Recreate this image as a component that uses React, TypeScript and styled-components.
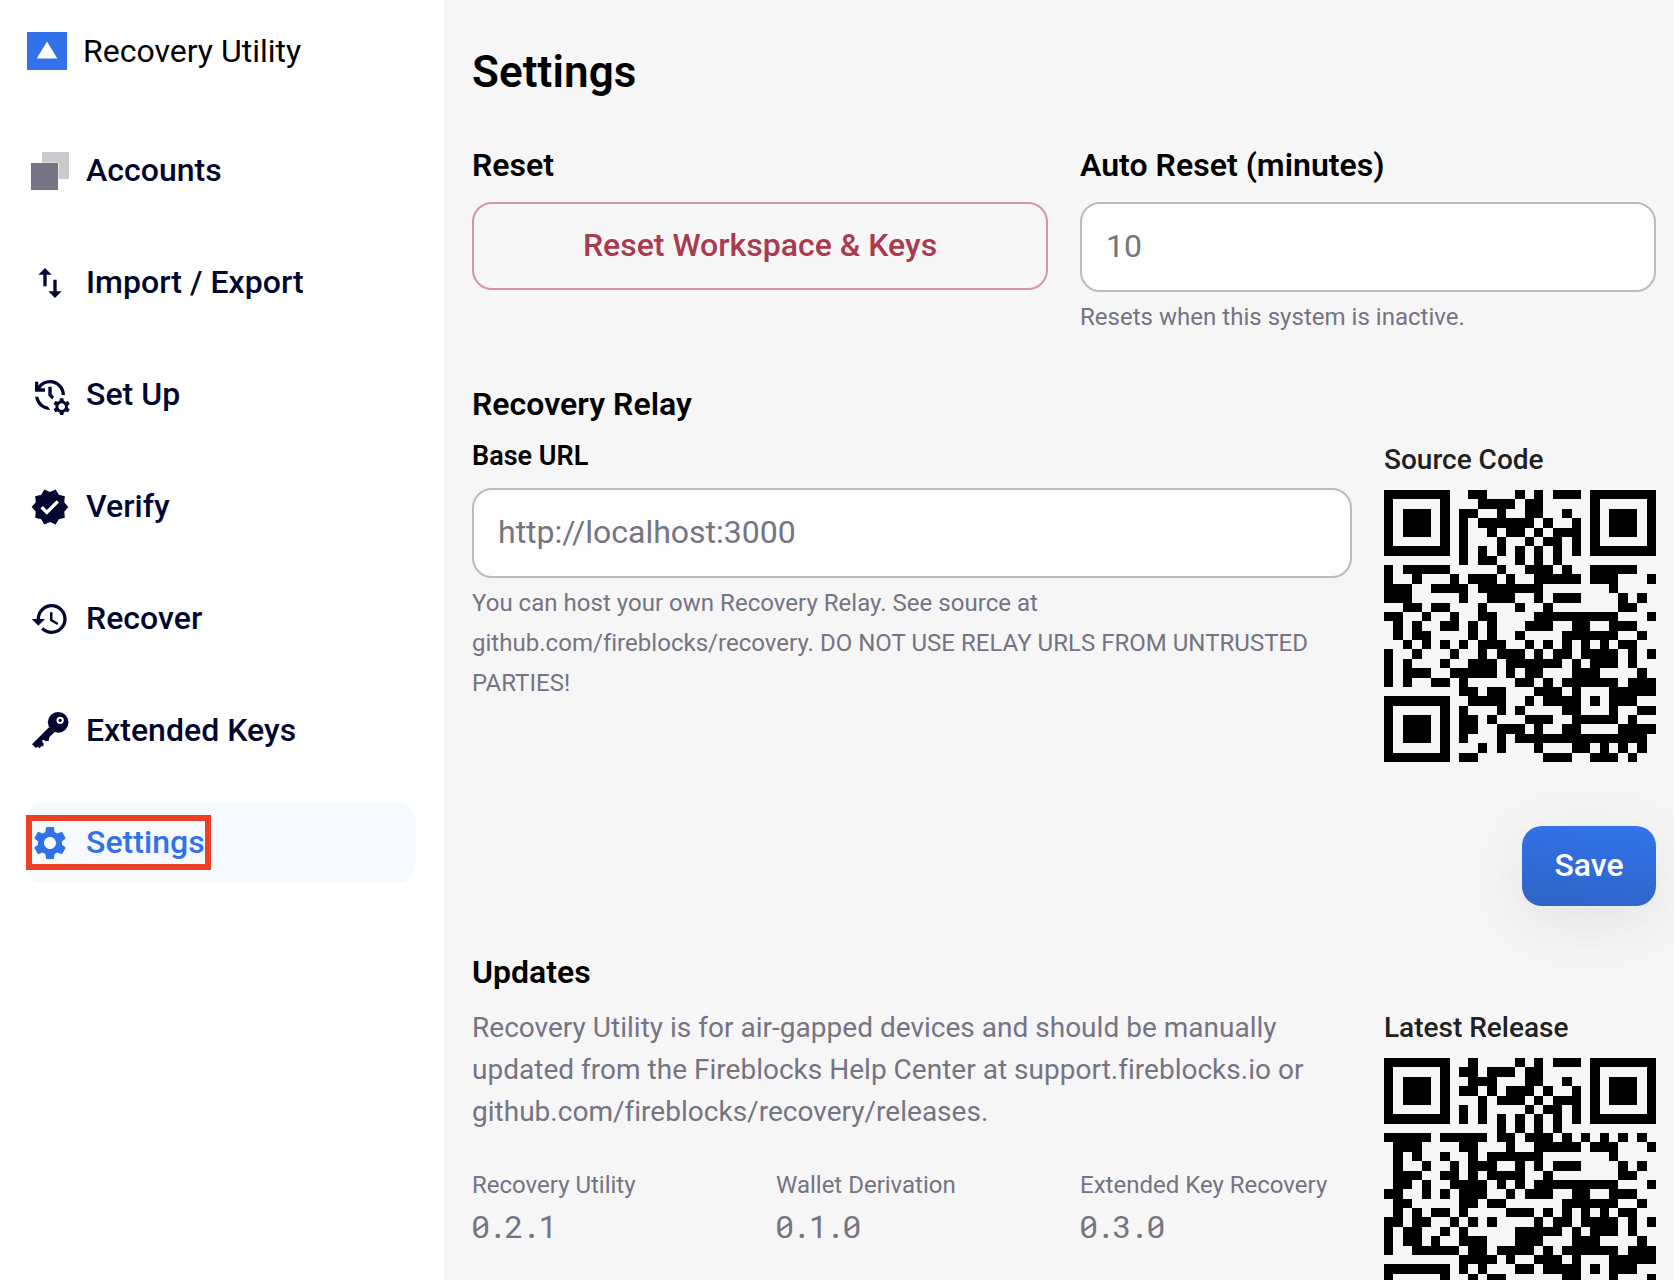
import React from "react";
import styled, { createGlobalStyle } from "styled-components";
import { MdHistory, MdImportExport, MdManageHistory, MdSettings, MdVerified } from "react-icons/md";

const GlobalStyle = createGlobalStyle`
  *, *::before, *::after { box-sizing: border-box; }
  body {
    margin: 0;
    background: #f6f6f6;
    font-family: Roboto, "Liberation Sans", sans-serif;
    font-variant-ligatures: none;
  }
  h1, h2, h3, p, dl, dt, dd { margin: 0; }
`;

const Page = styled.div`
  display: flex;
  height: 1280px;
  overflow: hidden;
`;

const Sidebar = styled.aside`
  flex: none;
  width: 444px;
  padding: 19px 28px 0 24px;
  background: #fff;
`;

const Brand = styled.div`
  display: flex;
  align-items: center;
  gap: 16px;
  height: 64px;
  padding-left: 3px;
  color: #000;
  font-size: 32px;
`;

const Nav = styled.nav`
  display: flex;
  flex-direction: column;
  gap: 32px;
  margin-top: 48px;
`;

const NavItem = styled.a<{ $active?: boolean }>`
  position: relative;
  display: flex;
  align-items: center;
  gap: 16px;
  height: 80px;
  padding-left: 6px;
  border-radius: 20px;
  background: ${(p) => (p.$active ? "#f6faff" : "transparent")};
  color: ${(p) => (p.$active ? "#3171ea" : "#020730")};

  svg { flex: none; }
`;

const NavLabel = styled.span`
  padding-bottom: 2px;
  font-size: 32px;
  font-weight: 500;
  line-height: 48px;
  letter-spacing: 0.03px;
`;

const Highlight = styled.span`
  position: absolute;
  left: 2px;
  top: 12px;
  width: 185px;
  height: 55px;
  border: 6px solid #ee4023;
`;

const Main = styled.main`
  flex: 1;
  padding: 44px 18px 0 28px;
`;

const Title = styled.h1`
  font-size: 44px;
  font-weight: 600;
  line-height: 56px;
  letter-spacing: 0.1px;
  color: #000;
`;

const Heading = styled.h2`
  font-size: 32px;
  font-weight: 600;
  line-height: 48px;
  letter-spacing: 0.03px;
  color: #000;
`;

const Columns = styled.section<{ $top: number }>`
  display: grid;
  grid-template-columns: 1fr 1fr;
  column-gap: 32px;
  margin-top: ${(p) => p.$top}px;
`;

const ResetButton = styled.button`
  display: block;
  width: 100%;
  height: 88px;
  margin-top: 13px;
  padding: 0 0 2px;
  border: 2px solid #d397a1;
  border-radius: 20px;
  background: transparent;
  color: #a93a50;
  font: 500 32px/48px Roboto, sans-serif;
`;

const Field = styled.input<{ $top: number }>`
  display: block;
  width: 100%;
  height: 90px;
  margin-top: ${(p) => p.$top}px;
  padding: 0 24px 2px;
  border: 2px solid #bbbbbb;
  border-radius: 20px;
  background: #fdfdfd;
  color: #757384;
  font: 400 32px Roboto, sans-serif;
  outline: none;
`;

const Hint = styled.p`
  margin-top: 5px;
  color: #757384;
  font-size: 24px;
  line-height: 40px;
  letter-spacing: 0.025px;
`;

const Split = styled.section`
  display: grid;
  grid-template-columns: 880px 272px;
  column-gap: 32px;
`;

const Label = styled.h3`
  padding-top: 8px;
  font-size: 27px;
  font-weight: 600;
  line-height: 40px;
  color: #000;
`;

const QrCaption = styled.h3`
  margin-top: 11px;
  font-size: 28px;
  font-weight: 500;
  line-height: 42px;
  color: #212121;
`;

const QrSvg = styled.svg`
  display: block;
  margin-top: 9px;
`;

const Actions = styled.div`
  display: flex;
  justify-content: flex-end;
  margin-top: 64px;
`;

const SaveButton = styled.button`
  width: 134px;
  height: 80px;
  padding: 0 0 2px;
  border: 0;
  border-radius: 20px;
  background: linear-gradient(8deg, #3063c4 0%, #3174ec 100%);
  box-shadow: 0 16px 40px rgba(20, 40, 60, 0.04), 0 12px 72px rgba(0, 40, 20, 0.06);
  color: #fff;
  font: 500 32px/48px Roboto, sans-serif;
`;

const Body = styled.p`
  margin-top: 11px;
  color: #757384;
  font-size: 28px;
  line-height: 42px;
  letter-spacing: 0.015px;
`;

const Versions = styled.dl`
  display: grid;
  grid-template-columns: repeat(3, 1fr);
  column-gap: 32px;
  margin-top: 32px;
  color: #757384;
`;

const VersionName = styled.dt`
  font-size: 24px;
  line-height: 40px;
  white-space: nowrap;
`;

const VersionNumber = styled.dd`
  margin-left: -1px;
  font-family: "Roboto Mono", "Liberation Mono", monospace;
  font-size: 32px;
  line-height: 42px;
  letter-spacing: -2.4px;
`;

const Logo = () => (
  <svg width="40" height="38" viewBox="0 0 40 38">
    <rect width="40" height="38" fill="#3171ea" />
    <path d="M20 9.5 30.3 26.5H9.7z" fill="#fff" />
  </svg>
);

const AccountsIcon = () => (
  <svg width="40" height="40" viewBox="0 0 40 40">
    <rect x="12" y="1" width="27" height="27" fill="#cacacf" />
    <rect x="0.6" y="11.6" width="28" height="28" fill="#f5f5f5" />
    <rect x="1" y="12" width="27" height="27" fill="#757384" />
  </svg>
);

const KeyIcon = () => (
  <svg width="40" height="40" viewBox="90 63 120 120" fill="currentColor">
    <path d="M96 163 147 112 163 127 148 142 146 153 135 154 134 150 127 150 127 157 131 160 130 169 124 169 119 175 113 170 108 174z" />
    <circle cx="174.500" cy="97" r="31" />
    <circle cx="180.500" cy="91" r="8" fill="none" stroke="#fff" strokeWidth="6" />
  </svg>
);

/* Dark modules of each row, as start-end column runs. */
const SOURCE_CODE = [
  "0-7 9-11 14-15 16-17 18-21 22-29",
  "0-1 6-7 10-14 15-17 22-23 28-29",
  "0-1 2-5 6-7 8-10 12-13 15-17 19-20 22-23 24-27 28-29",
  "0-1 2-5 6-7 8-9 10-16 17-18 20-21 22-23 24-27 28-29",
  "0-1 2-5 6-7 8-9 11-12 13-15 16-17 18-21 22-23 24-27 28-29",
  "0-1 6-7 8-9 12-13 15-16 17-19 20-21 22-23 28-29",
  "0-7 8-9 10-11 12-13 14-15 16-17 18-19 20-21 22-29",
  "8-9 10-12 14-15 16-17 18-19",
  "0-1 2-7 12-13 15-18 19-20 22-27",
  "0-1 3-4 7-8 9-12 13-14 16-21 22-25 28-29",
  "0-3 5-9 10-17 24-25",
  "0-3 8-9 11-14 16-17 18-21 25-26 27-28",
  "2-4 5-7 10-11 14-15 17-18 25-27",
  "0-2 4-5 7-8 10-12 16-25 28-29",
  "1-2 3-4 6-8 9-10 11-12 15-18 20-22 24-27",
  "1-2 3-5 9-10 11-12 14-15 19-25 27-28",
  "2-3 4-5 6-7 8-9 10-13 15-16 17-18 19-20 21-22 23-24 25-27",
  "0-1 3-4 7-8 10-11 12-15 16-17 18-20 21-25 26-27 28-29",
  "0-1 2-3 6-7 9-12 13-19 20-21 22-25 26-27",
  "0-1 2-5 7-12 13-14 15-17 20-23 27-28",
  "0-1 2-3 5-7 8-9 14-16 17-18 19-25 26-29",
  "8-10 11-13 16-19 20-21 24-29",
  "0-7 9-13 15-16 17-21 22-23 24-27",
  "0-1 6-7 8-9 12-13 14-15 19-21 24-25 27-29",
  "0-1 2-5 6-7 8-10 11-12 15-18 20-25 26-27",
  "0-1 2-5 6-7 8-10 12-15 16-17 19-21 25-29",
  "0-1 2-5 6-7 8-9 12-13 14-28",
  "0-1 6-7 10-11 12-13 16-17 20-22 23-24 25-26 27-28",
  "0-7 8-10 17-20 22-25 26-27",
];

const LATEST_RELEASE = [
  "0-7 9-10 14-15 16-17 18-21 22-29",
  "0-1 6-7 8-10 11-14 15-17 22-23 28-29",
  "0-1 2-5 6-7 9-12 15-17 19-20 22-23 24-27 28-29",
  "0-1 2-5 6-7 8-10 11-12 13-16 17-18 20-21 22-23 24-27 28-29",
  "0-1 2-5 6-7 10-11 12-15 16-17 18-21 22-23 24-27 28-29",
  "0-1 6-7 8-9 10-11 15-16 17-19 20-21 22-23 28-29",
  "0-7 8-9 10-11 12-13 14-15 16-17 18-19 20-21 22-29",
  "12-13 14-15 16-17 18-19",
  "0-5 6-11 12-14 15-18 19-20 21-22 23-24 25-26 27-28",
  "1-4 8-10 13-14 16-21 22-25 28-29",
  "1-2 3-4 6-7 9-10 11-17 24-25",
  "1-2 4-5 7-8 9-12 14-15 16-17 18-21 25-26 27-28",
  "1-4 6-8 9-10 11-15 17-18 25-27",
  "1-3 4-5 7-11 12-13 14-15 16-25 28-29",
  "0-2 4-5 6-7 8-11 13-14 15-18 20-22 24-27",
  "1-3 8-10 11-13 19-25 27-28",
  "1-2 3-4 5-7 8-9 13-16 17-18 19-20 21-22 23-24 25-27",
  "0-2 3-5 7-8 9-10 11-12 16-17 18-20 21-25 26-27 28-29",
  "0-1 2-4 6-7 8-9 14-19 20-21 22-25 26-27",
  "0-1 2-4 5-6 8-11 14-17 20-23 27-28",
  "0-1 3-8 9-11 12-16 17-18 19-25 26-29",
  "8-12 13-14 16-19 20-21 24-29",
  "0-7 8-9 10-11 14-16 17-21 22-23 24-27",
  "0-1 6-7 9-10 11-13 19-21 24-25 28-29",
];

const QrCode = ({ rows, title }: { rows: string[]; title: string }) => {
  const d = rows
    .map((row, y) =>
      row
        .split(" ")
        .map((run) => {
          const [start, end] = run.split("-").map(Number);
          return `M${start} ${y}H${end}V${y + 1}H${start}z`;
        })
        .join("")
    )
    .join("");
  return (
    <QrSvg width="272" height="272" viewBox="0 0 29 29" shapeRendering="crispEdges" role="img" aria-label={title}>
      <path d={d} fill="#000" />
    </QrSvg>
  );
};

const NAV = [
  { label: "Accounts", icon: <AccountsIcon /> },
  { label: "Import / Export", icon: <MdImportExport size={40} /> },
  { label: "Set Up", icon: <MdManageHistory size={40} /> },
  { label: "Verify", icon: <MdVerified size={40} /> },
  { label: "Recover", icon: <MdHistory size={40} /> },
  { label: "Extended Keys", icon: <KeyIcon /> },
  { label: "Settings", icon: <MdSettings size={40} />, active: true },
];

const VERSIONS = [
  ["Recovery Utility", "0.2.1"],
  ["Wallet Derivation", "0.1.0"],
  ["Extended Key Recovery", "0.3.0"],
];

export default function App() {
  return (
    <>
      <GlobalStyle />
      <Page>
        <Sidebar>
          <Brand>
            <Logo />
            Recovery Utility
          </Brand>
          <Nav>
            {NAV.map((item) => (
              <NavItem key={item.label} $active={item.active}>
                {item.icon}
                <NavLabel>{item.label}</NavLabel>
                {item.active && <Highlight />}
              </NavItem>
            ))}
          </Nav>
        </Sidebar>
        <Main>
          <Title>Settings</Title>
          <Columns $top={41}>
            <div>
              <Heading>Reset</Heading>
              <ResetButton>Reset Workspace &amp; Keys</ResetButton>
            </div>
            <div>
              <Heading>Auto Reset (minutes)</Heading>
              <Field $top={13} defaultValue="10" />
              <Hint>Resets when this system is inactive.</Hint>
            </div>
          </Columns>
          <Columns $top={43}>
            <Heading>Recovery Relay</Heading>
          </Columns>
          <Split>
            <div>
              <Label>Base URL</Label>
              <Field $top={12} defaultValue="http://localhost:3000" />
              <Hint>
                You can host your own Recovery Relay. See source at github.com/fireblocks/recovery. DO NOT USE RELAY
                URLS FROM UNTRUSTED PARTIES!
              </Hint>
            </div>
            <div>
              <QrCaption>Source Code</QrCaption>
              <QrCode rows={SOURCE_CODE} title="Source Code" />
            </div>
          </Split>
          <Actions>
            <SaveButton>Save</SaveButton>
          </Actions>
          <Columns $top={42}>
            <Heading>Updates</Heading>
          </Columns>
          <Split>
            <div>
              <Body>
                Recovery Utility is for air-gapped devices and should be manually updated from the Fireblocks Help
                Center at support.fireblocks.io or github.com/fireblocks/recovery/releases.
              </Body>
              <Versions>
                {VERSIONS.map(([name, version]) => (
                  <div key={name}>
                    <VersionName>{name}</VersionName>
                    <VersionNumber>{version}</VersionNumber>
                  </div>
                ))}
              </Versions>
            </div>
            <div>
              <QrCaption>Latest Release</QrCaption>
              <QrCode rows={LATEST_RELEASE} title="Latest Release" />
            </div>
          </Split>
        </Main>
      </Page>
    </>
  );
}
